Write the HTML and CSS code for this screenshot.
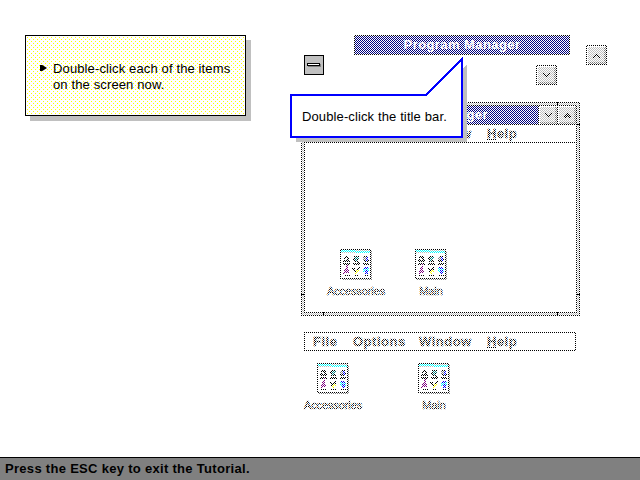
FILE: index.html
```html
<!DOCTYPE html>
<html lang="en">
<head>
<meta charset="utf-8">
<title>Tutorial</title>
<link rel="stylesheet" href="styles.css">
</head>
<body>
<svg class="defs" width="0" height="0">
  <symbol id="group" viewBox="0 0 32 31" shape-rendering="crispEdges">
    <path fill="#808080" d="M2 2h30v29H2z"/>
    <path d="M0 0h31v30H0z"/>
    <path fill="#fff" d="M1 4h29v25H1z"/>
    <path fill="#0ff" d="M1 1h29v3H1z"/>
    <path fill="#c0c0c0" d="M15 1h15v1H15zM1 3h14v1H1z"/>
    <path d="M5 7h3v1h1v3h1v2H9v1h1v2H3v-2h1v-1H3v-2h1V8h1zM14 7h5v3h-1v2h1v2h1v2h-7v-2h1v-3h-1V9h1zM24 7h4v3h1v2h-1v2h1v2h-6v-2h1v-2h-1v-2h1z"/>
    <path fill="#fff" d="M5 9h2v2H5zM4 13h5v1H4zM14 13h4v1h-4zM24 13h4v1h-4z"/>
    <path fill="#008080" d="M15 8h4v2h-2v2h-2z"/>
    <path fill="#808080" d="M23 8h3v3h-3z"/><path fill="#00f" d="M26 8h2v4h-2z"/>
    <path fill="none" stroke="#800080" stroke-width="2" d="M4 25l3-7 1 6M5 23h4"/>
    <path fill="none" stroke="#000" d="M4 26.500h6M14 26.500h5M24 26.500h5"/>
    <path fill="none" stroke="#000" stroke-width="2" d="M13 19l3 4 3-5M16 23v2"/>
    <path fill="#ff0" d="M16 21h3v2h-2v2h-2v-2h1z"/>
    <path fill="#0ff" d="M23 19h6v4h-6z"/><path fill="#00f" d="M24 18h4v2h-4zM25 21h3v4h-3z"/>
  </symbol>
  <symbol id="down" viewBox="0 0 7 5" shape-rendering="crispEdges"><path d="M0 0h2v1h1v1h1V1h1V0h2v2H6v1H5v1H4v1H3V4H2V3H1V2H0z"/></symbol>
  <symbol id="up" viewBox="0 0 7 5" shape-rendering="crispEdges"><path d="M3 0h1v1h1v1h1v1h1v2H5V4H4V3H3v1H2v1H0V3h1V2h1V1h1z"/></symbol>
</svg>
<div class="desktop">
  <section class="note"><span class="bullet"></span><p>Double-click each of the items<br>on the screen now.</p></section>

  <div class="titlebar loose"><span>Program Manager</span></div>
  <div class="button loose-down"><svg><use href="#down"/></svg></div>
  <div class="button loose-up"><svg><use href="#up"/></svg></div>

  <section class="window">
    <div class="inner">
      <header><div class="caption"><span>Program Manager</span></div><div class="cap-button"><svg><use href="#down"/></svg></div><div class="cap-button"><svg><use href="#up"/></svg></div></header>
      <nav class="menu"><span class="m1">File</span><span class="m2">Options</span><span class="m3">Window</span><span class="m4"><u>H</u>elp</span></nav>
      <div class="groups">
        <figure class="acc"><svg><use href="#group"/></svg><figcaption>Accessories</figcaption></figure>
        <figure class="main"><svg><use href="#group"/></svg><figcaption>Main</figcaption></figure>
      </div>
    </div>
  </section>

  <nav class="menu loose-menu"><span class="m1">File</span><span class="m2">Options</span><span class="m3">Window</span><span class="m4"><u>H</u>elp</span></nav>
  <div class="loose-groups">
    <figure class="acc"><svg><use href="#group"/></svg><figcaption>Accessories</figcaption></figure>
    <figure class="main"><svg><use href="#group"/></svg><figcaption>Main</figcaption></figure>
  </div>

  <div class="dither"></div>
  <svg class="ticks" width="279" height="214" shape-rendering="crispEdges"><path d="M256 0h1v4h-1zM275 22h4v1h-4zM0 192h4v1H0zM275 192h4v1h-4zM22 210h1v4h-1zM256 210h1v4h-1z"/></svg>
  <div class="control"><i></i></div>
  <div class="callout">
    <svg width="180" height="90" shape-rendering="crispEdges"><path fill="#c0c0c0" d="M6 43H142L177 8V86H6z"/><path fill="#fff" stroke="#00f" stroke-width="2" d="M1 39H136L172 3V81H1z"/></svg>
    <p>Double-click the title bar.</p>
  </div>
  <footer>Press the ESC key to exit the Tutorial.</footer>
</div>
</body>
</html>
```
FILE: styles.css
```css
* { box-sizing: border-box; }
body { margin: 0; background: #fff; color: #000; font: 13px/16px "Liberation Sans", Arial, sans-serif; }
p, figure { margin: 0; }
svg { display: block; }
.defs { position: absolute; }
.desktop { position: relative; width: 640px; height: 480px; overflow: hidden; white-space: nowrap; }

.note {
  position: absolute; left: 25px; top: 35px; width: 221px; height: 81px;
  display: flex; padding: 25px 0 0 14px; border: 1px solid #000;
  background-color: #fff;
  background-image:
    conic-gradient(from 270deg at 1px 1px, #ff0 25%, transparent 0),
    conic-gradient(from 270deg at 1px 1px, #ff0 25%, transparent 0);
  background-size: 4px 4px;
  background-position: 1px 1px, 3px 3px;
  box-shadow: 5px 5px #c0c0c0;
  letter-spacing: .13px;
}
.bullet { width: 7px; height: 6px; margin: 4px 6px 0 0; background: #000; clip-path: polygon(0 0, 33% 0, 100% 50%, 33% 100%, 0 100%); }

.titlebar, .caption { background: #000080; color: #fff; font-weight: bold; text-align: center; letter-spacing: .42px; }
.loose { position: absolute; left: 354px; top: 35px; width: 216px; height: 20px; border: 1px solid #000; line-height: 18px; }
.button { position: absolute; width: 21px; height: 20px; border: 1px solid #000; }
.button, .cap-button { display: flex; align-items: center; justify-content: center; background: #c0c0c0; box-shadow: inset 1px 1px #fff, inset -2px -2px #808080; }
.button svg, .cap-button svg { width: 7px; height: 5px; }
.loose-down { left: 536px; top: 65px; }
.loose-up { left: 586px; top: 45px; }

.window { position: absolute; left: 301px; top: 102px; width: 279px; height: 214px; border: 1px solid #000; background: #c0c0c0; padding: 2px; }
.inner { height: 208px; border: 1px solid #000; background: #fff; }
.inner header { display: flex; height: 19px; border-bottom: 1px solid #000; }
.caption { flex: 1; padding-left: 16px; line-height: 18px; }
.cap-button { width: 19px; border-left: 1px solid #000; }
.menu { display: flex; height: 18px; border-bottom: 1px solid #000; font-weight: bold; line-height: 17px; letter-spacing: .5px; -webkit-text-stroke: .3px #000; }
.inner .menu { padding-left: 8px; }
.m1 { width: 40px; }
.m2 { width: 66px; }
.m3 { width: 68px; }
.loose-menu { position: absolute; left: 304px; top: 332px; width: 272px; height: 19px; border: 1px solid #000; padding-left: 8px; }
.groups { display: flex; padding: 106px 0 0 11px; }
.acc, .main { display: flex; flex-direction: column; align-items: center; width: 80px; font-size: 11px; letter-spacing: -.1px; }
.acc svg, .main svg { width: 32px; height: 31px; }
figcaption { margin-top: 4px; line-height: 14px; -webkit-text-stroke: .4px #000; }
.groups .main { margin-left: -5px; }
.loose-groups { position: absolute; left: 293px; top: 363px; display: flex; gap: 21px; }

.dither { position: absolute; left: 296px; top: 30px; width: 320px; height: 390px; background: repeating-conic-gradient(#fff 0 25%, transparent 0 50%) 0 0 / 2px 2px; }
.ticks { position: absolute; left: 301px; top: 102px; }
.control { position: absolute; left: 304px; top: 55px; width: 20px; height: 20px; border: 1px solid #000; background: #c0c0c0; padding: 7px 0 0 2px; }
.control i { display: block; width: 13px; height: 3px; border: 1px solid #000; background: #fff; box-shadow: 1px 1px #808080; }
.callout { position: absolute; left: 290px; top: 56px; width: 180px; height: 90px; }
.callout svg { position: absolute; left: 0; top: 0; }
.callout p { position: relative; padding: 53px 0 0 12px; letter-spacing: .12px; }
footer { position: absolute; left: 0; right: 0; bottom: 0; height: 23px; border-top: 1px solid #000; background: #808080; padding-left: 5px; font-weight: bold; line-height: 22px; letter-spacing: .3px; }
```
